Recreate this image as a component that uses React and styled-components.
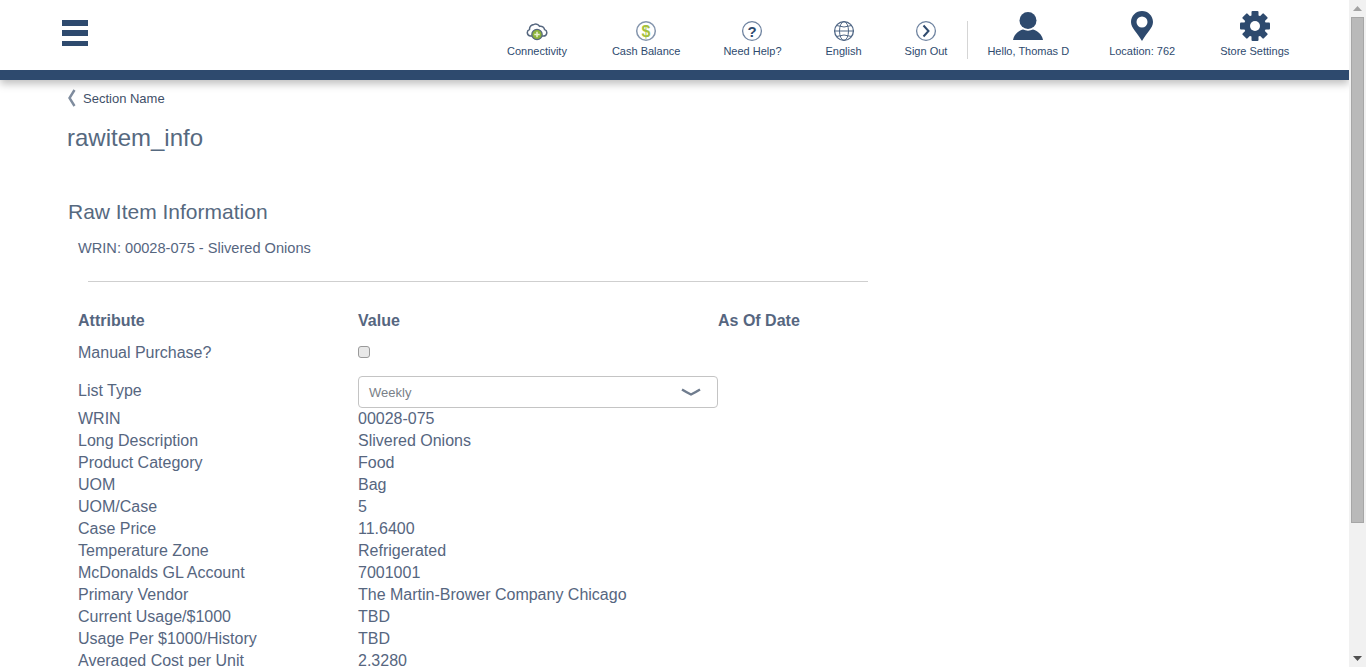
import styled, { createGlobalStyle } from "styled-components";

const GlobalStyle = createGlobalStyle`
    body{
        margin: 0;
        background-color: #FFFFFF;
        font-family: "Liberation Sans", Arial, sans-serif;
        color: #56667F;
    }
`

const navItems = [
    { label: "Connectivity", gap: 0, icon: <CloudIcon /> },
    { label: "Cash Balance", gap: 45, icon: <CashIcon /> },
    { label: "Need Help?", gap: 43, icon: <HelpIcon /> },
    { label: "English", gap: 44, icon: <GlobeIcon /> },
    { label: "Sign Out", gap: 43, icon: <SignOutIcon /> },
]

const userItems = [
    { label: "Hello, Thomas D", gap: 0, icon: <UserIcon /> },
    { label: "Location: 762", gap: 40, icon: <PinIcon /> },
    { label: "Store Settings", gap: 45, icon: <GearIcon /> },
]

const attributes = [
    ["WRIN", "00028-075"],
    ["Long Description", "Slivered Onions"],
    ["Product Category", "Food"],
    ["UOM", "Bag"],
    ["UOM/Case", "5"],
    ["Case Price", "11.6400"],
    ["Temperature Zone", "Refrigerated"],
    ["McDonalds GL Account", "7001001"],
    ["Primary Vendor", "The Martin-Brower Company Chicago"],
    ["Current Usage/$1000", "TBD"],
    ["Usage Per $1000/History", "TBD"],
    ["Averaged Cost per Unit", "2.3280"],
]

export default function App(){
    return(
        <Shell>
            <GlobalStyle />
            <Content>
                <Header>
                    <TopBar>
                        <MenuButton aria-label="Menu">
                            <MenuLine />
                            <MenuLine />
                            <MenuLine />
                        </MenuButton>
                        <NavGroup>
                            {navItems.map((item) => (
                                <NavItem key={item.label} $gap={item.gap}>
                                    <IconSlot>{item.icon}</IconSlot>
                                    <NavLabel>{item.label}</NavLabel>
                                </NavItem>
                            ))}
                        </NavGroup>
                        <Divider />
                        <UserGroup>
                            {userItems.map((item) => (
                                <NavItem key={item.label} $gap={item.gap}>
                                    <UserSlot>{item.icon}</UserSlot>
                                    <NavLabel>{item.label}</NavLabel>
                                </NavItem>
                            ))}
                        </UserGroup>
                    </TopBar>
                    <BlueBar />
                </Header>
                <Main>
                    <Breadcrumb>
                        <svg width="10" height="18" viewBox="0 0 10 18">
                            <path d="M7.500 1L2.500 9L7.500 17" fill="none" stroke="#7F8C9E" strokeWidth="2.400" />
                        </svg>
                        <span>Section Name</span>
                    </Breadcrumb>
                    <PageTitle>rawitem_info</PageTitle>
                    <SectionTitle>Raw Item Information</SectionTitle>
                    <Wrin>WRIN: 00028-075 - Slivered Onions</Wrin>
                    <Rule />
                    <Table>
                        <HeadCell>Attribute</HeadCell>
                        <HeadCell>Value</HeadCell>
                        <HeadCell>As Of Date</HeadCell>

                        <CheckLabel>Manual Purchase?</CheckLabel>
                        <CheckCell><Check type="checkbox" /></CheckCell>
                        <span />

                        <ListLabel>List Type</ListLabel>
                        <FakeSelect>
                            <span>Weekly</span>
                            <svg width="20" height="9" viewBox="0 0 20 9">
                                <path d="M1 1.500Q5 4 10 6.500Q15 4 19 1.500" fill="none" stroke="#6F7C8E" strokeWidth="2.400" />
                            </svg>
                        </FakeSelect>
                        <span />

                        {attributes.map(([name, value]) => (
                            <Row key={name}>
                                <Cell>{name}</Cell>
                                <Cell>{value}</Cell>
                                <span />
                            </Row>
                        ))}
                    </Table>
                </Main>
            </Content>
            <ScrollRail>
                <ArrowBox>
                    <svg width="9" height="5" viewBox="0 0 9 5"><path d="M4.500 0L9 5H0z" fill="#A3A3A3" /></svg>
                </ArrowBox>
                <Thumb />
                <ArrowBox>
                    <svg width="9" height="5" viewBox="0 0 9 5"><path d="M0 0H9L4.500 5z" fill="#505050" /></svg>
                </ArrowBox>
            </ScrollRail>
        </Shell>
    )
}

function CloudIcon(){
    return(
        <svg width="22" height="22" viewBox="0 0 22 22">
            <path d="M6.500 16H4.500a3.300 3.300 0 0 1 -1 -6.400a4.800 4.800 0 0 1 4.500 -5.200a5 5 0 0 1 5.600 1.900a4 4 0 0 1 5 3.300a3.300 3.300 0 0 1 -1.100 6.400H16" fill="#FFFFFF" stroke="#56677F" strokeWidth="1.500" />
            <circle cx="11" cy="14.500" r="5.200" fill="#8DB33A" stroke="#56677F" strokeWidth="1.200" />
            <path d="M11 11.800V17.200M8.300 14.500H13.700" stroke="#E9F0CF" strokeWidth="1.500" />
        </svg>
    )
}

function CashIcon(){
    return(
        <svg width="22" height="22" viewBox="0 0 22 22">
            <circle cx="11" cy="11" r="9.300" fill="#FFFFFF" stroke="#8495AD" strokeWidth="1.500" />
            <text x="11" y="16.500" textAnchor="middle" fontFamily="Liberation Sans" fontWeight="700" fontSize="16" fill="#A5C13D">$</text>
        </svg>
    )
}

function HelpIcon(){
    return(
        <svg width="22" height="22" viewBox="0 0 22 22">
            <circle cx="11" cy="11" r="9.400" fill="#FFFFFF" stroke="#6E83A0" strokeWidth="1.300" />
            <text x="11" y="16.500" textAnchor="middle" fontFamily="Liberation Sans" fontWeight="700" fontSize="15" fill="#2F4A6E">?</text>
        </svg>
    )
}

function GlobeIcon(){
    return(
        <svg width="22" height="22" viewBox="0 0 22 22" fill="none" stroke="#4F6685" strokeWidth="1">
            <circle cx="11" cy="11" r="9.400" strokeWidth="1.300" />
            <ellipse cx="11" cy="11" rx="4.500" ry="9.400" />
            <path d="M1.500 11H20.500M3.500 5.500Q11 8.500 18.500 5.500M3.500 16.500Q11 13.500 18.500 16.500" />
        </svg>
    )
}

function SignOutIcon(){
    return(
        <svg width="22" height="22" viewBox="0 0 22 22" fill="none">
            <circle cx="11" cy="11" r="9.400" stroke="#6E83A0" strokeWidth="1.300" />
            <path d="M8.500 5.500L13.500 11L8.500 16.500" stroke="#2F4A6E" strokeWidth="2" />
        </svg>
    )
}

function UserIcon(){
    return(
        <svg width="30" height="28" viewBox="0 0 30 28" fill="#2E4A6E">
            <circle cx="15" cy="8.500" r="8.500" />
            <path d="M0 28C1 22 6 18.500 10 17.500C13 19 17 19 20 17.500C24 18.500 29 22 30 28Z" />
        </svg>
    )
}

function PinIcon(){
    return(
        <svg width="22" height="30" viewBox="0 0 22 30">
            <path fillRule="evenodd" fill="#2E4A6E" d="M11 0C5 0 0 4.800 0 11C0 17 6.500 22 11 30C15.500 22 22 17 22 11C22 4.800 17 0 11 0ZM11 5.500A5.500 5.500 0 1 1 11 16.500A5.500 5.500 0 1 1 11 5.500Z" />
        </svg>
    )
}

function GearIcon(){
    return(
        <svg width="30" height="30" viewBox="0 0 30 30">
            <g fill="#2E4A6E">
                <circle cx="15" cy="15" r="11" />
                <rect x="11.500" y="0" width="7" height="30" rx="1" />
                <rect x="11.500" y="0" width="7" height="30" rx="1" transform="rotate(45 15 15)" />
                <rect x="11.500" y="0" width="7" height="30" rx="1" transform="rotate(90 15 15)" />
                <rect x="11.500" y="0" width="7" height="30" rx="1" transform="rotate(135 15 15)" />
            </g>
            <circle cx="15" cy="15" r="5" fill="#FFFFFF" />
        </svg>
    )
}

const Shell = styled.div`
    display: flex;
    height: 100vh;
    overflow: hidden;
`
const Content = styled.div`
    flex: 1;
    min-width: 0;
    overflow: hidden;
`
const ScrollRail = styled.aside`
    width: 17px;
    flex-shrink: 0;
    display: flex;
    flex-direction: column;
    background-color: #F1F1F1;
`
const ArrowBox = styled.div`
    height: 17px;
    display: flex;
    align-items: center;
    justify-content: center;
    svg{
        display: block;
    }
`
const Thumb = styled.div`
    height: 506px;
    margin: 0 2px auto;
    box-sizing: border-box;
    background-color: #B9B9B9;
    border: 1px solid #A6A6A6;
`
const Header = styled.header`
    position: relative;
    z-index: 5;
    background-color: #FFFFFF;
    box-shadow: 0 4px 8px rgba(0, 0, 0, 0.25);
`
const TopBar = styled.div`
    height: 70px;
    display: flex;
    align-items: stretch;
    padding-left: 62px;
`
const BlueBar = styled.div`
    height: 10px;
    background-color: #2E4A6E;
`
const MenuButton = styled.div`
    width: 26px;
    height: 26px;
    margin-top: 20px;
    margin-right: 419px;
    display: flex;
    flex-direction: column;
    justify-content: space-between;
`
const MenuLine = styled.div`
    height: 5.500px;
    background-color: #2E4A6E;
`
const NavGroup = styled.div`
    display: flex;
    align-items: flex-start;
    padding-top: 20px;
`
const UserGroup = styled.div`
    display: flex;
    align-items: flex-start;
    padding-top: 11px;
    margin-left: 19px;
`
const Divider = styled.div`
    width: 1px;
    height: 38px;
    margin-top: 21px;
    margin-left: 20px;
    background-color: #D5D5D5;
`
const NavItem = styled.div`
    display: flex;
    flex-direction: column;
    align-items: center;
    margin-left: ${(props) => props.$gap}px;
`
const IconSlot = styled.div`
    height: 22px;
    display: flex;
    align-items: center;
    justify-content: center;
    margin-bottom: 3px;
    svg{
        display: block;
    }
`
const UserSlot = styled(IconSlot)`
    height: 30px;
    margin-bottom: 4px;
`
const NavLabel = styled.span`
    font-size: 11px;
    line-height: 13px;
    color: #2E4A6E;
    white-space: nowrap;
`
const Main = styled.main`
    padding: 8px 0 0 67px;
`
const Breadcrumb = styled.div`
    display: flex;
    align-items: center;
    gap: 6px;
    height: 20px;
    font-size: 13px;
    color: #3F5068;
`
const PageTitle = styled.h1`
    margin: 16px 0 0;
    font-size: 24px;
    line-height: 28px;
    font-weight: 400;
    color: #56697F;
`
const SectionTitle = styled.h2`
    margin: 48px 0 0 1px;
    font-size: 21px;
    line-height: 24px;
    font-weight: 400;
    color: #56697F;
`
const Wrin = styled.p`
    margin: 15px 0 0 11px;
    font-size: 14.600px;
    line-height: 18px;
`
const Rule = styled.hr`
    width: 780px;
    margin: 24px 0 0 21px;
    border: none;
    border-top: 1px solid #CFCFCF;
`
const Table = styled.div`
    display: grid;
    grid-template-columns: 280px 360px 150px;
    margin: 29px 0 0 11px;
    font-size: 16px;
`
const HeadCell = styled.div`
    font-weight: 700;
    line-height: 20px;
`
const CheckLabel = styled.div`
    margin-top: 12px;
    line-height: 20px;
`
const CheckCell = styled.div`
    margin-top: 11px;
    height: 20px;
    display: flex;
    align-items: center;
`
const Check = styled.input`
    width: 12px;
    height: 12px;
    margin: 0;
    appearance: none;
    background-color: #E8E8E8;
    border: 1px solid #9A9A9A;
    border-radius: 3px;
`
const ListLabel = styled.div`
    margin-top: 18px;
    line-height: 20px;
`
const FakeSelect = styled.div`
    margin-top: 13px;
    height: 32px;
    box-sizing: border-box;
    display: flex;
    align-items: center;
    justify-content: space-between;
    padding: 0 16px 0 10px;
    background-color: #FFFFFF;
    border: 1px solid #C4C4C4;
    border-radius: 4px;
    font-size: 13px;
    color: #7A7F88;
`
const Row = styled.div`
    display: contents;
`
const Cell = styled.div`
    line-height: 22px;
`
